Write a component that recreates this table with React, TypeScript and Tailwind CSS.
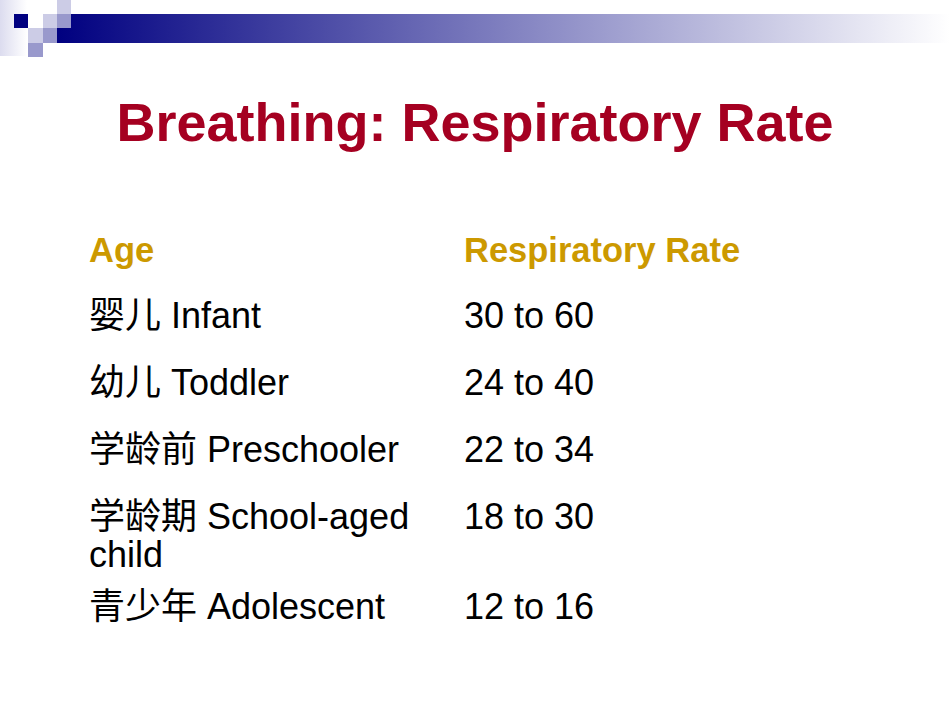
const rows = [
  { age: "婴儿 Infant", rate: "30 to 60", h: "h-[67px]" },
  { age: "幼儿 Toddler", rate: "24 to 40", h: "h-[67px]" },
  { age: "学龄前 Preschooler", rate: "22 to 34", h: "h-[67px]" },
  { age: "学龄期 School-aged child", rate: "18 to 30", h: "h-[90px]" },
  { age: "青少年 Adolescent", rate: "12 to 16", h: "h-[67px]" },
]

function Corner() {
  // little square pattern over the banner
  return (
    <svg className="absolute left-0 top-0" width="72" height="58" viewBox="0 0 72 58">
      <defs>
        <linearGradient id="fade" x1="0" x2="1" y1="0" y2="0">
          <stop offset="0" stopColor="#dcdcef" />
          <stop offset="1" stopColor="#ffffff" />
        </linearGradient>
      </defs>
      <rect x="0" y="0" width="27" height="56" fill="url(#fade)" />
      <rect x="14" y="14" width="14" height="14" fill="#000080" />
      <rect x="43" y="14" width="14" height="14" fill="#ccccE6" />
      <rect x="57" y="0" width="14" height="14" fill="#ccccE6" />
      <rect x="57" y="14" width="14" height="14" fill="#9999cc" />
      <rect x="28" y="28" width="15" height="15" fill="#ccccE6" />
      <rect x="43" y="28" width="14" height="15" fill="#9999cc" />
      <rect x="28" y="43" width="15" height="14" fill="#9999cc" />
    </svg>
  )
}

export default function App() {
  return (
    <div className="w-[950px] h-[713px] bg-white overflow-hidden font-['Liberation_Sans','Noto_Sans_CJK_SC',sans-serif]">
      <div className="relative h-[57px] pt-[14px]">
        <div className="ml-[57px] h-[29px] bg-[linear-gradient(to_right,#000080,#ffffff)]" />
        <Corner />
      </div>

      <h1 className="mt-[38px] text-center text-[54px] leading-[54px] font-bold text-[#a50021]">
        Breathing: Respiratory Rate
      </h1>

      <div className="mt-[82px] pl-[89px] text-[36px] leading-[38px] text-black">
        <div className="grid grid-cols-[375px_1fr] h-[66px] text-[34.5px] font-bold text-[#cc9900]">
          <div>Age</div>
          <div>Respiratory Rate</div>
        </div>
        {rows.map((r) => (
          <div key={r.rate} className={`grid grid-cols-[375px_1fr] ${r.h}`}>
            <div className="pr-[10px]">{r.age}</div>
            <div>{r.rate}</div>
          </div>
        ))}
      </div>
    </div>
  )
}
